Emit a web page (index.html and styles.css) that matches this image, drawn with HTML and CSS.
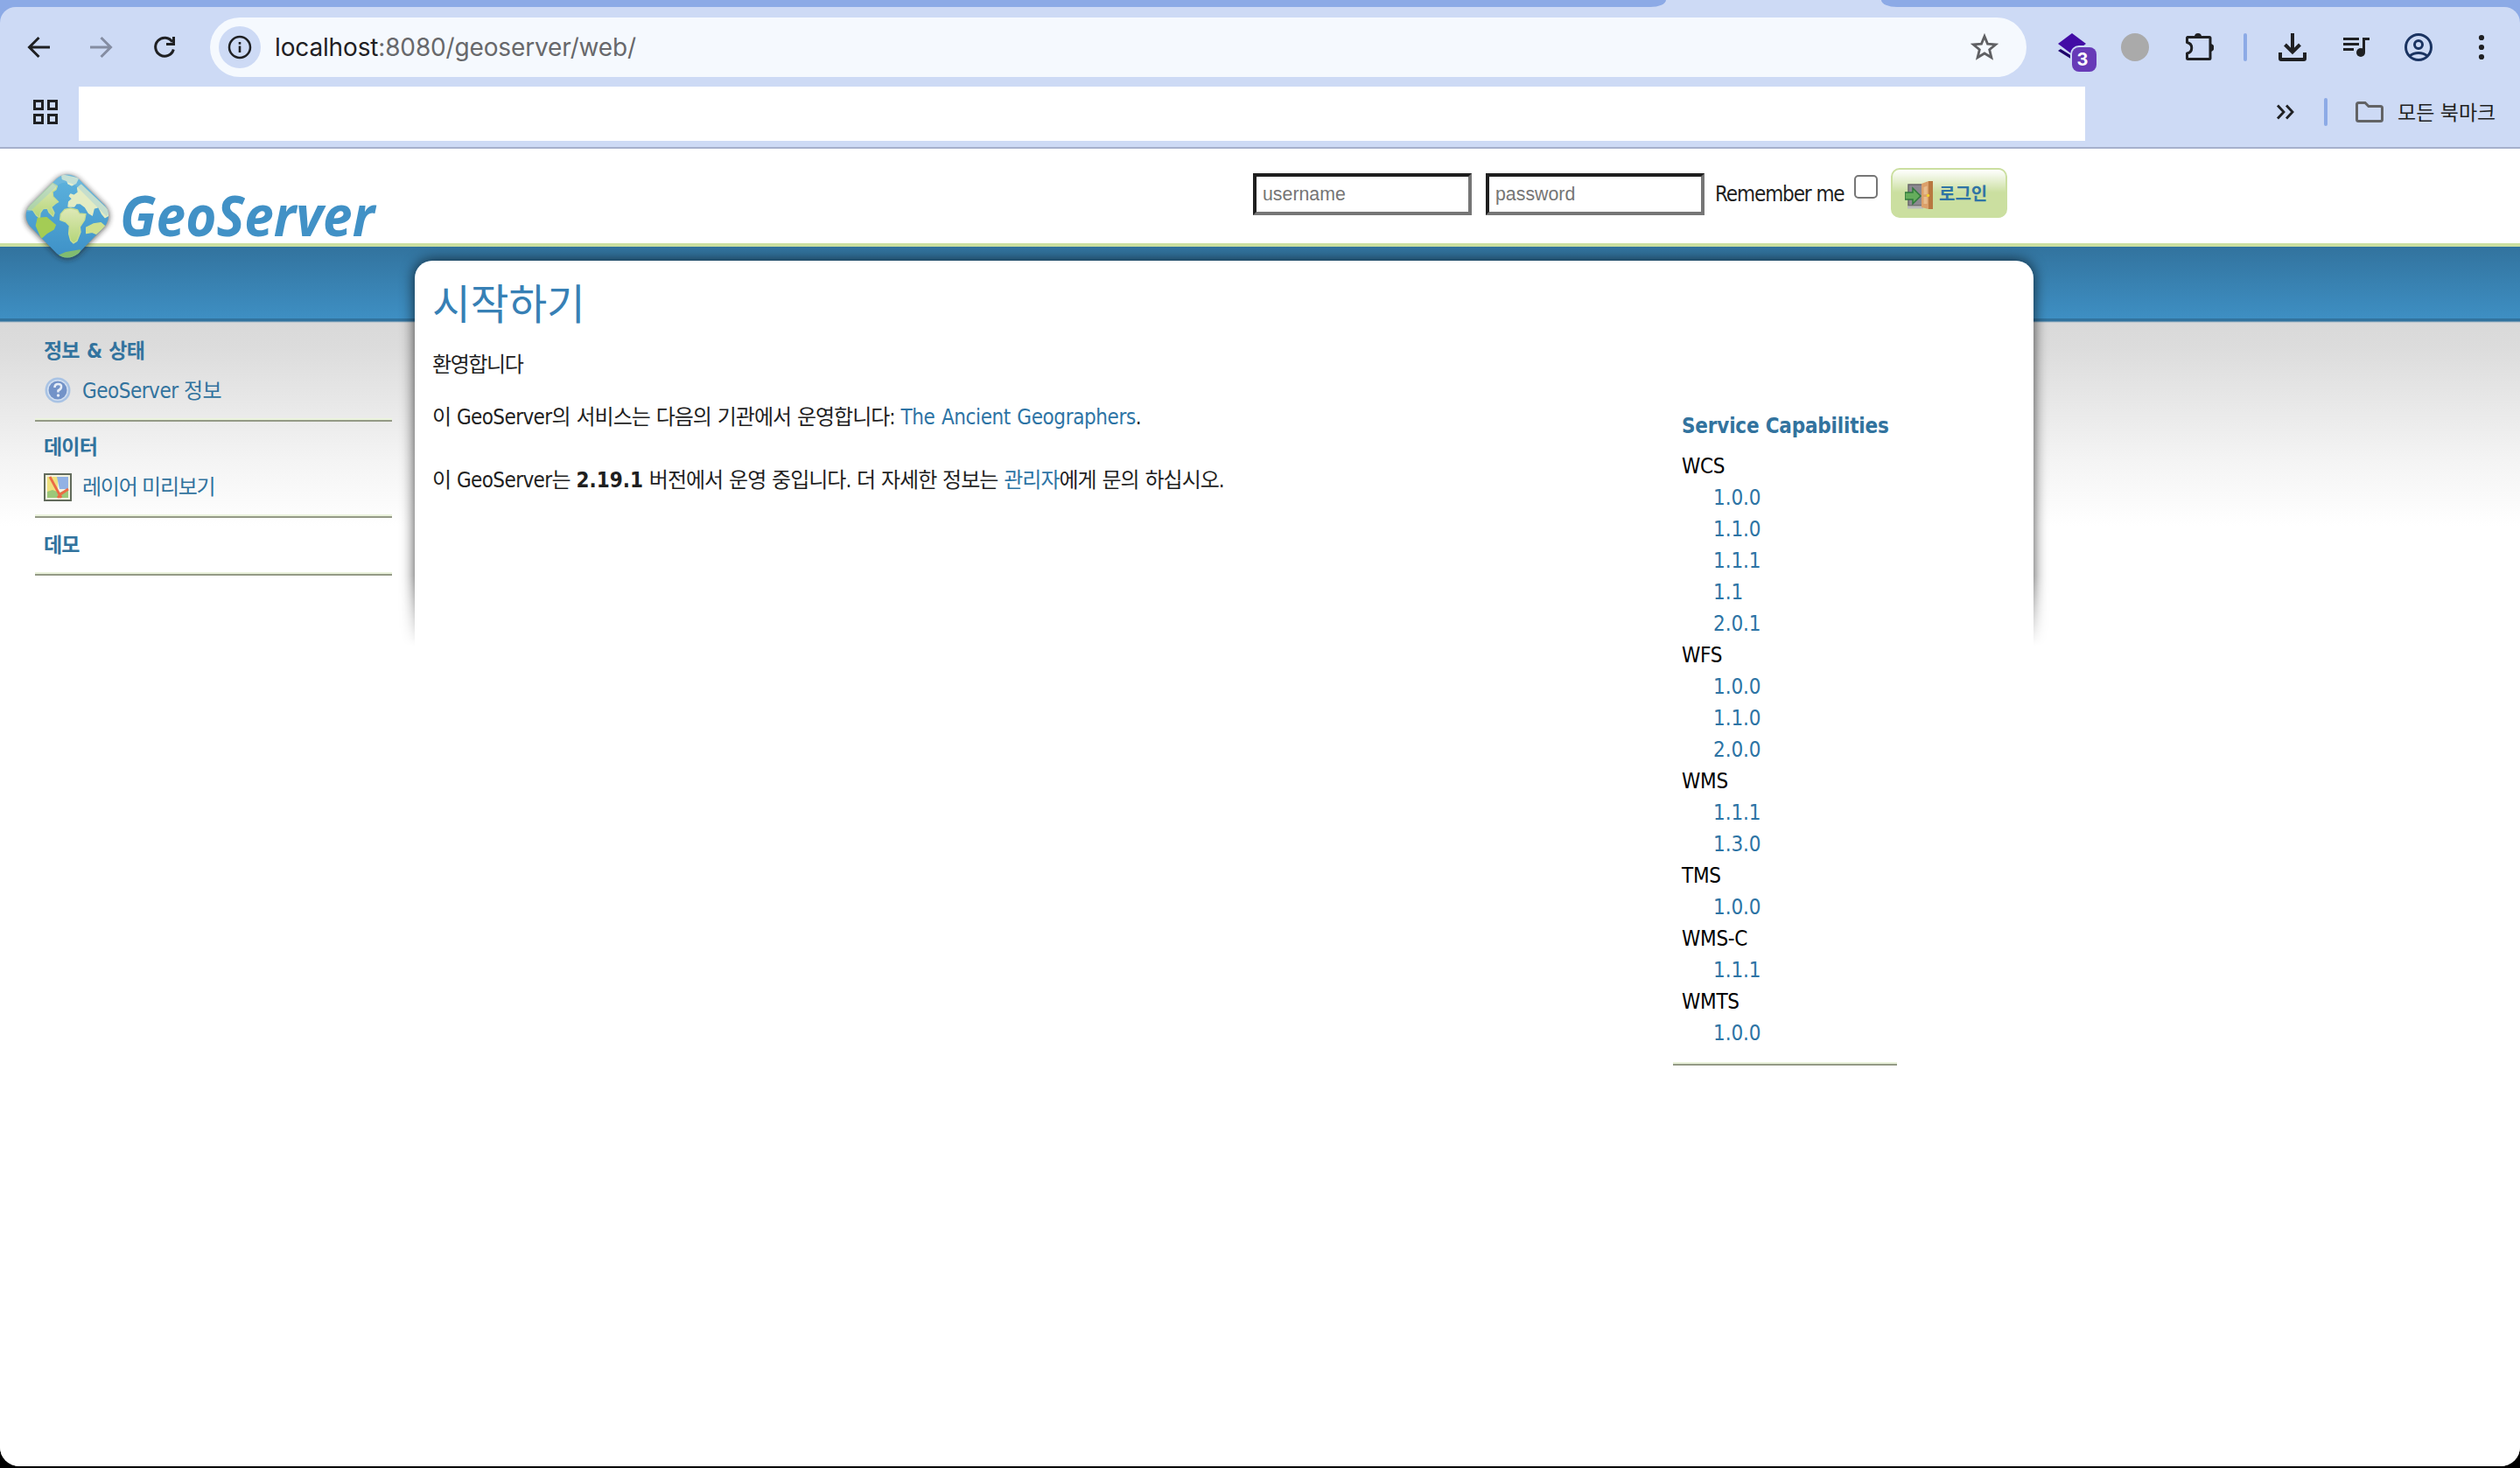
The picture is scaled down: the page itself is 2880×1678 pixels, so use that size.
FILE: index.html
```html
<!DOCTYPE html>
<html lang="ko">
<head>
<meta charset="utf-8">
<title>GeoServer: 시작하기</title>
<link rel="stylesheet" href="styles.css">
</head>
<body>
<div class="window">
  <div class="tabstrip"><div class="tabs-left"></div><div class="tabs-right"></div></div>
  <div class="chrome">
    <div class="toolbar">
      <svg class="nav-icon" viewBox="0 0 32 32"><path d="M29 16H6M16.500 5L5.500 16l11 11" fill="none" stroke="#1f2023" stroke-width="3"/></svg>
      <svg class="nav-icon forward" viewBox="0 0 32 32"><path d="M3 16h23M15.500 5l11 11-11 11" fill="none" stroke="#858da2" stroke-width="3"/></svg>
      <svg class="nav-icon reload" viewBox="0 0 32 32"><path d="M26.300 18.500A10.500 10.500 0 1 1 25 10" fill="none" stroke="#1f2023" stroke-width="3"/><path d="M28 4v10H18v-3h7V4z" fill="#1f2023"/></svg>
      <div class="omnibox">
        <span class="site-info"><svg viewBox="0 0 28 28" width="28" height="28"><circle cx="14" cy="14" r="12" fill="none" stroke="#1f2023" stroke-width="2.500"/><path d="M14 12.500V20M14 8v2.700" stroke="#1f2023" stroke-width="2.600"/></svg></span>
        <span class="url"><b>localhost</b>:8080/geoserver/web/</span>
        <svg class="star" viewBox="0 0 32 32"><path d="M16 3.500l3.500 8.600 9.300.7-7.100 6 2.200 9L16 23l-7.900 4.800 2.200-9-7.100-6 9.300-.7z" fill="none" stroke="#5f6063" stroke-width="2.800"/></svg>
      </div>
      <div class="ext">
        <svg viewBox="0 0 32 32" width="32" height="32"><path d="M0 20l3-2 13 8v4z" fill="#1d006b"/><path d="M16 0l16 12-16 12L0 12z" fill="#420ba5"/></svg>
        <span class="badge">3</span>
      </div>
      <span class="gray-dot"></span>
      <svg class="puzzle" viewBox="0 0 34 34"><path d="M4 6.500h25a1 1 0 0 1 1 1v23a1 1 0 0 1-1 1H4.500a1 1 0 0 1-1-1V25c7-1.500 7-11 0-12.500V7.500a1 1 0 0 1 .5-1z" fill="none" stroke="#1f2023" stroke-width="3" stroke-linejoin="round"/><path d="M12 6a4 4 0 0 1 8 0zM30 14a4.500 4.500 0 0 1 0 9z" fill="#1f2023"/></svg>
      <span class="divider"></span>
      <svg class="download" viewBox="0 0 32 32"><path d="M16 0v20M7.500 13l8.500 8.500 8.500-8.500M2 22v7q0 1 1 1h26q1 0 1-1v-7" fill="none" stroke="#1f2023" stroke-width="4"/></svg>
      <svg class="music" viewBox="0 0 30 24"><path d="M0 2.500h18M0 8.500h18M0 14.500h12" stroke="#1f2023" stroke-width="3"/><path d="M23.500 18V2.500H30" fill="none" stroke="#1f2023" stroke-width="3"/><circle cx="20" cy="18" r="5" fill="#1f2023"/></svg>
      <svg class="person" viewBox="0 0 32 32"><g fill="none" stroke="#1a3361" stroke-width="3"><circle cx="16" cy="16" r="14.500"/><circle cx="16" cy="13" r="4.500"/><path d="M6 26q4-3.500 10-3.500T26 26"/></g></svg>
      <svg class="dots" viewBox="0 0 8 32"><g fill="#1f2023"><circle cx="4" cy="5" r="3.100"/><circle cx="4" cy="16" r="3.100"/><circle cx="4" cy="27" r="3.100"/></g></svg>
    </div>
    <div class="bookmarks">
      <svg class="apps" viewBox="0 0 28 28"><path d="M1.500 1.500h9v9h-9zM17.500 1.500h9v9h-9zM1.500 17.500h9v9h-9zM17.500 17.500h9v9h-9z" fill="none" stroke="#1f2023" stroke-width="3"/></svg>
      <div class="blank"></div>
      <svg class="more" viewBox="0 0 22 18"><path d="M2 1.500L9 9l-7 7.500M12 1.500L19 9l-7 7.500" fill="none" stroke="#1f2023" stroke-width="2.800"/></svg>
      <span class="divider"></span>
      <svg class="folder" viewBox="0 0 32 24"><path d="M3.500 1.500h7.500l4 4h13.500q2 0 2 2v13q0 2-2 2h-25q-2 0-2-2v-17q0-2 2-2z" fill="none" stroke="#626365" stroke-width="3"/></svg>
      <span class="all-bm">모든 북마크</span>
    </div>
  </div>

  <div class="header">
    <svg class="logo" viewBox="0 0 430 130">
      <defs>
        <linearGradient id="sea" x1="0" y1="0" x2="0" y2="1"><stop offset="0" stop-color="#5fb5df"/><stop offset="1" stop-color="#3c8fc6"/></linearGradient>
        <linearGradient id="land" x1="0" y1="0" x2="0" y2="1"><stop offset="0" stop-color="#dfe9b8"/><stop offset="1" stop-color="#b4d578"/></linearGradient>
        <filter id="sh" x="-20%" y="-20%" width="140%" height="140%"><feGaussianBlur stdDeviation="9"/></filter>
        <clipPath id="gem"><path d="M165 72Q200 45 238 72L330 165Q355 200 330 235L238 330Q200 358 165 330L72 235Q45 200 72 165z"/></clipPath>
      </defs>
      <g transform="scale(.33333)">
        <path d="M165 74Q200 47 238 74L332 167Q357 202 332 237L238 334Q200 362 165 334L70 237Q43 202 70 167z" fill="#222" opacity=".75" filter="url(#sh)"/>
        <g clip-path="url(#gem)">
          <rect x="40" y="40" width="320" height="320" fill="url(#sea)"/>
          <g stroke-linejoin="round" stroke-width="4">
            <path d="M182 60L238 72L230 88L216 96L204 90L200 80L184 74z" fill="#e3eed0" stroke="#e3eed0"/>
            <path d="M150 88L166 98L162 110L150 118L152 134L170 152L160 158L146 170L156 190L152 202L138 188L132 174L118 176L108 190L106 208L94 198L82 180L60 178z" fill="url(#land)" stroke="#c5dc92"/>
            <path d="M100 208L130 206L160 232L154 246L130 260L112 276L94 234z" fill="#a4cc55" stroke="#a4cc55"/>
            <path d="M204 168L206 152L218 142L208 132L212 126L224 130L238 120L236 104L248 94L345 185L340 200L330 206L320 194L308 170L292 174L286 198L274 190L262 170L246 158L232 158L224 168z" fill="#e4ecc3" stroke="#e4ecc3"/>
            <path d="M176 214L178 194L192 178L212 174L236 180L242 192L264 194L260 214L244 238L246 256L234 286L222 294L212 284L206 262L208 234L196 222z" fill="url(#land)" stroke="#c8de93"/>
            <path d="M266 240L290 228L316 224L330 236L300 262L286 256L266 260z" fill="#cfe08f" stroke="#cfe08f"/>
            <path d="M172 336L196 326L244 318L240 332L220 350L180 350z" fill="#81bc70" stroke="#81bc70"/>
          </g>
          <path d="M165 72Q200 45 238 72L350 185L335 202L232 98Q200 76 172 92L72 186L50 186z" fill="#8cc6e0" opacity=".35"/>
        </g>
      </g>
      <text x="127" y="90" textLength="291" lengthAdjust="spacingAndGlyphs" class="logo-text">GeoServer</text>
    </svg>
    <div class="login">
      <span class="field">username</span>
      <span class="field">password</span>
      <span class="remember">Remember me</span>
      <span class="check"></span>
      <span class="button">
        <svg viewBox="0 0 32 32" width="32" height="32"><path d="M4 4h18v24H4z" fill="#8b8890" stroke="#69676b" stroke-width="1.500"/><path d="M3 30h18" stroke="#bbb" stroke-width="3"/><path d="M19 3l8-3v32l-8-2z" fill="#dba06a"/><path d="M21.500 7l4-1.500V15l-4 .5zM21.500 18h4v8h-4z" fill="#e8bd8d"/><path d="M27 0h5v32h-5z" fill="#b87840"/><circle cx="26.500" cy="16.500" r="1.700" fill="#f4d22e"/><path d="M0 13h9V8l9 9-9 9v-5H0z" fill="#65ad5c" stroke="#2f7a3b" stroke-width="1.500"/></svg>
        <span>로그인</span>
      </span>
    </div>
  </div>

  <div class="page">
    <div class="sidebar">
      <div class="group">
        <h3>정보 &amp; 상태</h3>
        <a class="item"><svg viewBox="0 0 32 32"><circle cx="16" cy="15" r="14.500" fill="#a9c3e4"/><circle cx="16" cy="15" r="12" fill="#d3e0f1"/><circle cx="16" cy="15" r="10.500" fill="#7393c8"/><path d="M12.500 12q0-4 4-4t3.500 3.500q0 2-3.500 4v2" fill="none" stroke="#e6edf7" stroke-width="2.600"/><circle cx="16.500" cy="21" r="1.700" fill="#e6edf7"/></svg><span class="i1">GeoServer 정보</span></a>
      </div>
      <div class="group">
        <h3>데이터</h3>
        <a class="item"><svg viewBox="0 0 32 32"><path d="M1 1h30v30H1z" fill="#f4f3df" stroke="#626b5c" stroke-width="2"/><path d="M4 4h12v24H4z" fill="#efe17d"/><path d="M15 4h13v14H18z" fill="#91b1e4"/><path d="M4 21l6-2 8 3 10-4v10H4z" fill="#9cc879"/><path d="M7 4l13 24M28 18l-9 6-3 4" fill="none" stroke="#ec6a45" stroke-width="2.800"/></svg><span class="i2">레이어 미리보기</span></a>
      </div>
      <div class="group last"><h3>데모</h3></div>
    </div>
    <div class="main">
      <div class="shade"><div></div></div>
      <div class="panel">
        <h1>시작하기</h1>
        <div class="cols">
          <div class="text">
            <p class="p1">환영합니다</p>
            <p class="p2">이 <span class="lat">GeoServer</span>의 서비스는 다음의 기관에서 운영합니다: <a class="org">The Ancient Geographers</a>.</p>
            <p class="p3">이 <span class="lat">GeoServer</span>는 <b>2.19.1</b> 버전에서 운영 중입니다. 더 자세한 정보는 <a>관리자</a>에게 문의 하십시오.</p>
          </div>
          <div class="caps">
            <h3>Service Capabilities</h3>
            <ul>
              <li>WCS</li><li><a>1.0.0</a></li><li><a>1.1.0</a></li><li><a>1.1.1</a></li><li><a>1.1</a></li><li><a>2.0.1</a></li>
              <li>WFS</li><li><a>1.0.0</a></li><li><a>1.1.0</a></li><li><a>2.0.0</a></li>
              <li>WMS</li><li><a>1.1.1</a></li><li><a>1.3.0</a></li>
              <li>TMS</li><li><a>1.0.0</a></li>
              <li>WMS-C</li><li><a>1.1.1</a></li>
              <li>WMTS</li><li><a>1.0.0</a></li>
            </ul>
          </div>
        </div>
      </div>
    </div>
  </div>
</div>
</body>
</html>
```
FILE: styles.css
```css
* { box-sizing: border-box; }
html, body { margin: 0; background: #000; }
body { font: 24px/36px "DejaVu Sans Condensed", "DejaVu Sans", "Noto Sans CJK KR", sans-serif; font-stretch: condensed; color: #1f1f1f; }
h1, h3, p, ul { margin: 0; padding: 0; }
svg { display: block; flex: none; }
span, a { white-space: nowrap; }
.window { width: 2880px; height: 1676px; background: #fff; border-radius: 0 0 22px 22px; overflow: hidden; display: flex; flex-direction: column; }

.tabstrip { height: 8px; background: #cddaf5; display: flex; justify-content: space-between; }
.tabs-left { width: 1904px; background: #8caae6; border-bottom-right-radius: 18px 8px; }
.tabs-right { width: 730px; background: #8caae6; border-bottom-left-radius: 18px 8px; }
.chrome { background: linear-gradient(#8caae6 20px, #cddaf5 20px); border-bottom: 2px solid #a6b0cc; }
.toolbar { height: 91px; padding: 1px 0 0 28px; display: flex; align-items: center; background: #cddaf5; border-radius: 18px 18px 0 0; }
.nav-icon { width: 32px; height: 32px; }
.forward { margin-left: 40px; }
.reload { margin-left: 40px; }
.omnibox { width: 2076px; height: 68px; margin-left: 36px; padding: 0 32px 0 10px; border-radius: 34px; background: #f5f9fe; display: flex; align-items: center; }
.site-info { width: 48px; height: 48px; border-radius: 50%; background: #cddaf5; display: flex; align-items: center; justify-content: center; }
.url { flex: 1; margin-left: 16px; font: 28px/36px Inter, sans-serif; color: #67686b; letter-spacing: -.15px; }
.url b { font-weight: 400; color: #1f2023; }
.star { width: 32px; height: 32px; }
.ext { position: relative; width: 32px; height: 32px; margin-left: 36px; }
.badge { position: absolute; left: 16px; top: 16px; width: 28px; height: 28px; border-radius: 8px; background: #673ab7; box-shadow: 0 0 0 2px #cddaf5; color: #fff; font: 700 20px/28px Inter, sans-serif; text-align: center; padding-right: 4px; }
.gray-dot { width: 32px; height: 32px; border-radius: 50%; background: #aaa; margin-left: 40px; }
.puzzle { width: 34px; height: 34px; margin: -3px 0 0 40px; }
.divider { width: 4px; height: 32px; border-radius: 2px; background: #8caae6; }
.toolbar .divider { margin-left: 34px; }
.download { width: 32px; height: 32px; margin-left: 36px; }
.music { width: 30px; height: 24px; margin-left: 42px; }
.person { width: 32px; height: 32px; margin-left: 40px; }
.dots { width: 8px; height: 32px; margin-left: 52px; }
.bookmarks { height: 69px; padding: 0 0 11px 38px; display: flex; align-items: center; background: #cddaf5; }
.apps { width: 28px; height: 28px; }
.blank { align-self: flex-start; flex: none; width: 2293px; height: 62px; margin-left: 24px; background: #fff; }
.more { width: 22px; height: 18px; margin-left: 218px; }
.bookmarks .divider { margin-left: 33px; }
.folder { width: 32px; height: 24px; margin-left: 32px; }
.all-bm { margin: -3px 0 0 16px; font: 23px/32px "Noto Sans CJK KR", sans-serif; }

.header { height: 112px; border-bottom: 4px solid #cbdfa0; display: flex; align-items: flex-start; position: relative; z-index: 2; }
.logo { width: 430px; height: 130px; margin: 10px 0 0 10px; overflow: visible; }
.logo-text { font: italic 700 64px "Open Sans", sans-serif; fill: #4191c6; }
.login { display: flex; align-items: center; margin: 22px 0 0 992px; height: 57px; }
.field { width: 250px; height: 48px; margin: 3px 16px 0 0; padding: 0 7px; border: 4px solid; border-color: #1f1f1f #767676 #767676 #1f1f1f; font: 21.333px/40px "Liberation Sans", sans-serif; color: #757575; }
.remember { width: 159px; margin: 2px 0 0 -4px; letter-spacing: -1.1px; }
.check { width: 27px; height: 27px; margin: -15px 15px 0 0; border: 2px solid #767676; border-radius: 5px; }
.button { width: 133px; height: 57px; padding: 4px 0 0 14px; border: 2px solid #cbdfa0; border-radius: 10px; background: linear-gradient(#fff, #cbdfa0 26px); display: flex; align-items: center; color: #2f74a5; font: 700 20px/30px "Noto Sans CJK KR", sans-serif; }
.button span { margin: -4px 0 0 7px; }

.page { flex: 1; display: flex; align-items: stretch; background: linear-gradient(#32739e, #3e8fc3 82px, #32739e 82px, #32739e 85px, #a3b8c6 86px, #d9d9d9 87px, #dcdcdc 115px, #f4f4f4 245px, #fff 320px); }
.sidebar { width: 474px; padding: 96px 26px 0 40px; }
.group { height: 114px; padding: 4px 10px 0; border-bottom: 2px solid #949a86; box-shadow: inset 0 -2px #eaf2dc; }
.group:first-child { height: 104px; padding-top: 5px; }
.group:nth-child(2) { height: 110px; padding-top: 11px; }
.group.last { height: 66px; padding-top: 13px; }
h3 { font-size: 24px; line-height: 36px; color: #32739e; font-weight: 700; }
.sidebar h3 { font-size: 23px; letter-spacing: -.8px; word-spacing: 1.8px; }
.item { display: flex; align-items: center; color: #32739e; height: 56px; }
.item svg { width: 32px; height: 32px; margin: -1px 12px 0 0; }
.i1 { letter-spacing: -.5px; }
.i2 { letter-spacing: -1.25px; }

.main { width: 1850px; margin-top: 16px; position: relative; }
.shade { position: absolute; inset: -16px -20px auto; height: 460px; padding: 16px 20px 0; overflow: hidden; -webkit-mask-image: linear-gradient(#000 376px, transparent 456px); mask-image: linear-gradient(#000 376px, transparent 456px); }
.shade div { height: 476px; border-radius: 20px; box-shadow: 0 0 16px rgba(0, 0, 0, .75); }
.panel { position: relative; height: 100%; background: #fff; border-radius: 20px; padding: 17px 20px 0; }
h1 { font: 400 47.500px/60px "Noto Sans CJK KR", sans-serif; color: #3780b5; letter-spacing: 0; }
.cols { display: flex; justify-content: space-between; padding-right: 136px; }
.text { padding-top: 24px; }
.p1 { letter-spacing: -1.4px; }
.p2 { margin-top: 24px; letter-spacing: -1px; word-spacing: 1px; }
.p3 { margin-top: 36px; letter-spacing: -1px; word-spacing: 1px; }
.lat { letter-spacing: -.6px; }
.org { letter-spacing: -.4px; }
.p3 b { letter-spacing: 0; }
p { white-space: nowrap; }
a { color: #2d74a5; }
.caps { width: 256px; margin-top: 85px; padding: 9px 10px 0; height: 758px; border-bottom: 2px solid #949a86; box-shadow: inset 0 -2px #eaf2dc; color: #000; }
.caps h3 { white-space: nowrap; letter-spacing: -.2px; }
.caps ul { list-style: none; margin-top: 10px; }
.caps li { height: 36px; letter-spacing: -.3px; }
.caps li a { margin-left: 36px; letter-spacing: -.1px; }
```
